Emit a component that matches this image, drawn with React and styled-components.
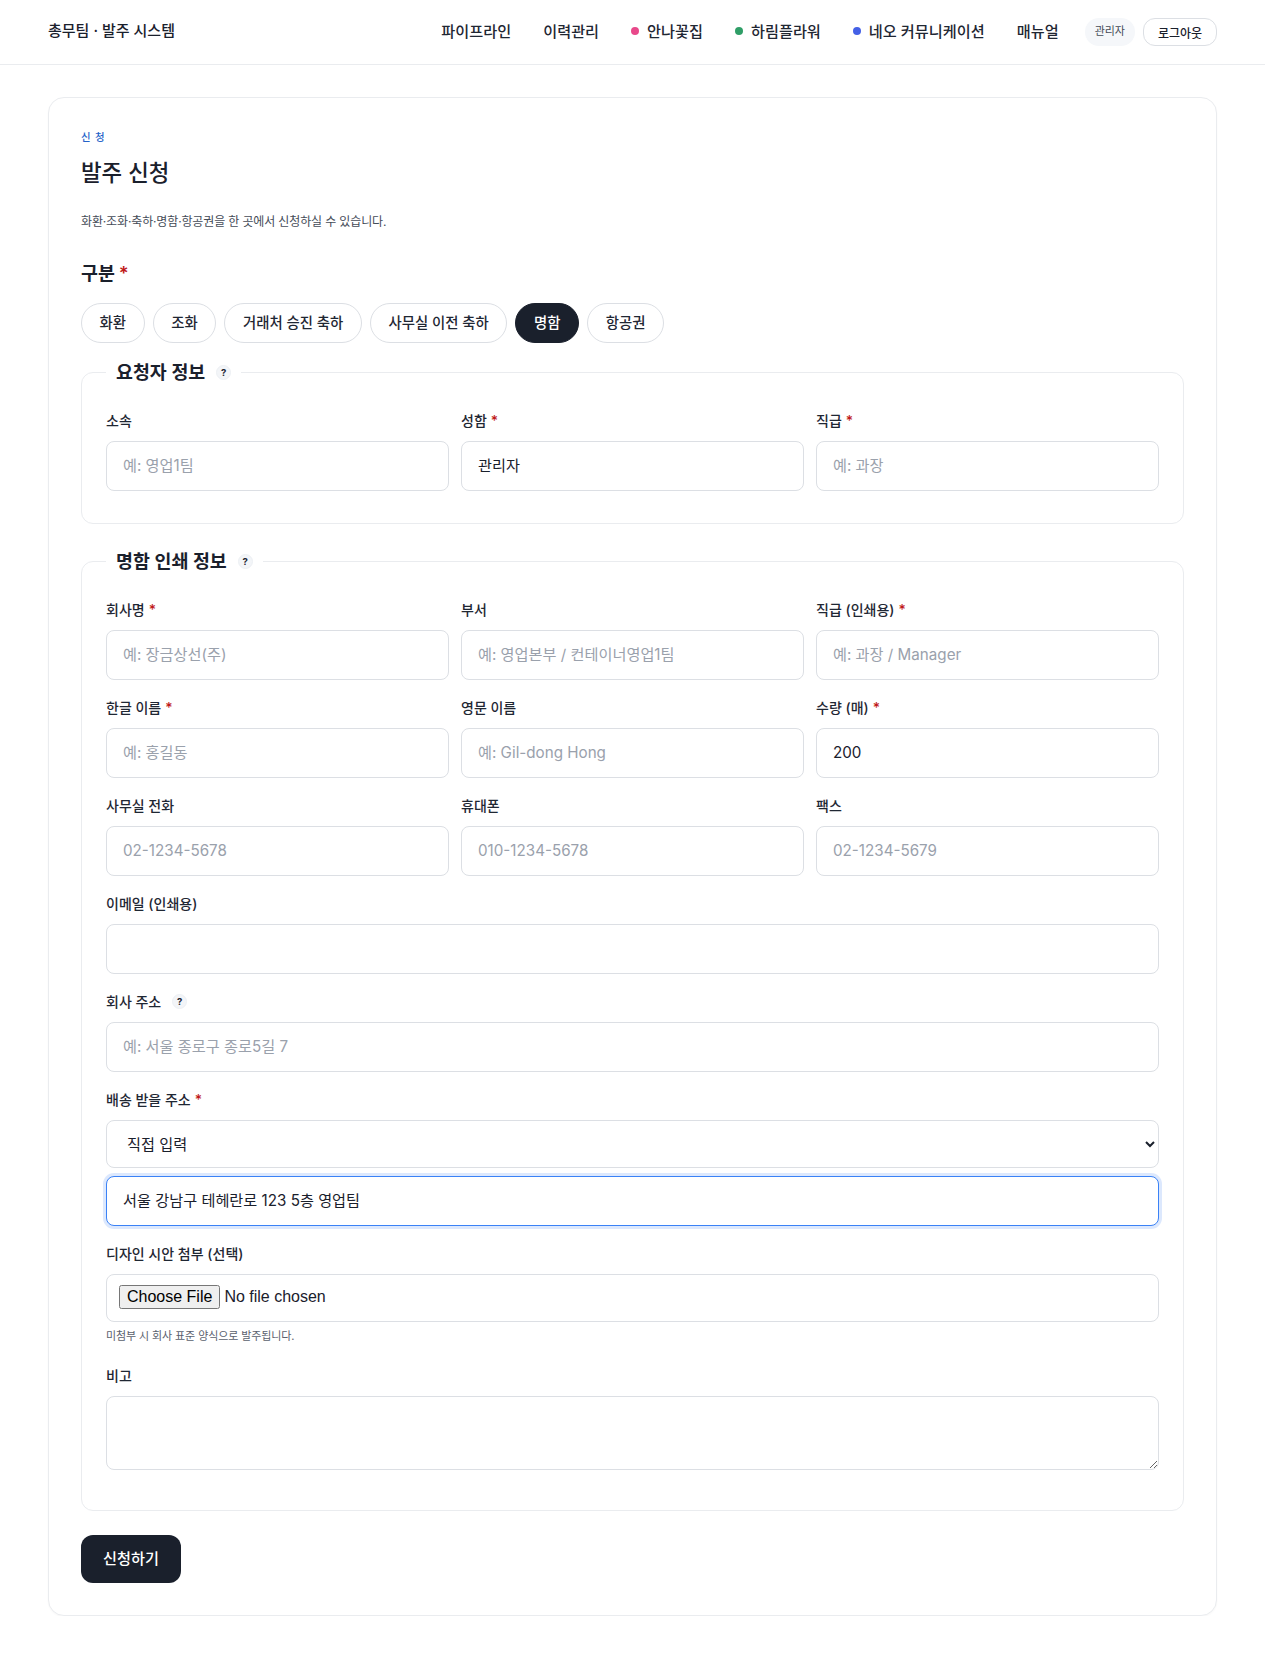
import styled, { createGlobalStyle } from 'styled-components';

const GlobalStyle = createGlobalStyle`
  * { box-sizing: border-box; }
  html, body { margin: 0; padding: 0; background: #fff; }
  body {
    font-family: Inter, "Noto Sans CJK KR", sans-serif;
    color: #1a202c;
  }
  #root { width: 1265px; }
`;

const Header = styled.header`
  height: 65px;
  padding: 0 48px;
  display: flex;
  align-items: center;
  justify-content: space-between;
  border-bottom: 1px solid #eaecef;
`;

const Brand = styled.div`
  padding-bottom: 5px;
  font-size: 15px;
  font-weight: 500;
`;

const Nav = styled.nav`
  display: flex;
  align-items: center;
`;

const NavLink = styled.a`
  display: flex;
  align-items: center;
  gap: 8px;
  margin-right: 32px;
  padding-bottom: 5px;
  font-size: 15.2px;
  font-weight: 500;
  color: #1f2733;
  &:last-of-type { margin-right: 26px; }
`;

const Dot = styled.span`
  width: 8px;
  height: 8px;
  margin-top: 3px;
  border-radius: 50%;
  background: ${(p) => p.$color};
`;

const RoleBadge = styled.span`
  height: 28px;
  padding: 0 10px 4px;
  margin-right: 8px;
  display: flex;
  align-items: center;
  border-radius: 14px;
  background: #f5f7fa;
  font-size: 11px;
  color: #444b57;
`;

const LogoutButton = styled.button`
  height: 28px;
  width: 74px;
  padding: 0;
  background: #fff;
  border: 1px solid #dcdfe4;
  border-radius: 12px;
  font: inherit;
  font-size: 12px;
  font-weight: 500;
  color: #1a202c;
`;

const Main = styled.main`
  padding: 32px 48px 0;
`;

const Card = styled.form`
  border: 1px solid #eaecef;
  border-radius: 16px;
  padding: 32px;
  background: #fff;
  box-shadow: 0 1px 2px rgba(0, 0, 0, 0.03);
`;

const Eyebrow = styled.div`
  font-size: 10.4px;
  font-weight: 500;
  line-height: 16px;
  letter-spacing: 0.8px;
  color: #2563c9;
`;

const Title = styled.h1`
  margin: 9px 0 0;
  font-size: 22.4px;
  line-height: 36px;
  font-weight: 500;
`;

const Lead = styled.p`
  margin: 21px 0 0;
  font-size: 12px;
  line-height: 20px;
  color: #444b57;
  letter-spacing: -0.14px;
`;

const GroupTitle = styled.div`
  margin-top: 28px;
  font-size: 18.4px;
  line-height: 27px;
  font-weight: 600;
`;

const Required = styled.span`
  color: #c01818;
  margin-left: 4px;
`;

const Pills = styled.div`
  display: flex;
  gap: 8px;
  margin-top: 16px;
`;

const Pill = styled.button`
  height: 40px;
  padding: 0 17.6px 3px;
  border-radius: 20px;
  border: 1px solid ${(p) => (p.$active ? '#1a202c' : '#dcdfe4')};
  background: ${(p) => (p.$active ? '#1a202c' : '#fff')};
  color: ${(p) => (p.$active ? '#fff' : '#1f2733')};
  font: inherit;
  font-size: 14.4px;
  font-weight: 500;
`;

const Section = styled.fieldset`
  margin: 16px 0 0;
  padding: 24px 24px ${(p) => p.$bottom}px;
  min-width: 0;
  border: 1px solid #eaecef;
  border-radius: 12px;
  & + & { margin-top: 24px; }
`;

const Legend = styled.legend`
  padding: 0 10px;
  display: flex;
  align-items: center;
  gap: 11px;
  font-size: 18.4px;
  line-height: 27px;
  font-weight: 600;
`;

const Help = styled.span`
  width: 15px;
  height: 15px;
  display: inline-flex;
  align-items: center;
  justify-content: center;
  border-radius: 50%;
  background: #f3f5f8;
  border: 1px solid #edf0f4;
  color: #1f2733;
  font-size: 9.6px;
  font-weight: 700;
`;

const Grid = styled.div`
  display: grid;
  grid-template-columns: repeat(3, 1fr);
  column-gap: 12px;
`;

const Field = styled.div`
  grid-column: span ${(p) => p.$span || 1};
  margin-bottom: 17px;
`;

const Label = styled.label`
  display: flex;
  align-items: center;
  margin-bottom: 10px;
  font-size: 14px;
  line-height: 21px;
  font-weight: 500;
  color: #1f2733;
  ${Help} { margin-left: 11px; }
`;

const Input = styled.input`
  display: block;
  width: 100%;
  padding: 12px 16px;
  background: #fff;
  border: 1px solid ${(p) => (p.$focused ? '#3b82f6' : '#dcdfe4')};
  border-radius: 8px;
  box-shadow: ${(p) => (p.$focused ? '0 0 0 3px rgba(59, 130, 246, 0.18)' : 'none')};
  font: inherit;
  font-size: 15.2px;
  line-height: 24px;
  color: #1a202c;
  outline: none;
  &::placeholder { color: #9aa1ac; }
`;

const Select = styled.select`
  display: block;
  width: 100%;
  height: 48px;
  margin-bottom: 8px;
  padding: 0 16px;
  background: #fff;
  border: 1px solid #dcdfe4;
  border-radius: 8px;
  font: inherit;
  font-size: 15.2px;
  color: #1a202c;
`;

const FileInput = styled.input`
  display: block;
  width: 100%;
  height: 48px;
  padding: 10px 12px;
  border: 1px solid #dcdfe4;
  border-radius: 8px;
  font-family: "Liberation Sans", sans-serif;
  font-size: 16px;
  line-height: 22px;
  color: #1a202c;
`;

const Hint = styled.div`
  margin: 4px 0 2px;
  font-size: 11px;
  line-height: 20px;
  color: #5a616d;
  letter-spacing: -0.1px;
`;

const TextArea = styled.textarea`
  display: block;
  width: 100%;
  height: 74px;
  padding: 12px 16px;
  border: 1px solid #dcdfe4;
  border-radius: 8px;
  font: inherit;
  font-size: 15.2px;
`;

const SubmitButton = styled.button`
  display: block;
  margin-top: 24px;
  width: 100px;
  height: 48px;
  padding-bottom: 5px;
  border: none;
  border-radius: 12px;
  background: #1a202c;
  color: #fff;
  font: inherit;
  font-size: 15.2px;
  font-weight: 500;
`;

const navItems = [
  { label: '파이프라인' },
  { label: '이력관리' },
  { label: '안나꽃집', color: '#e8488a' },
  { label: '하림플라워', color: '#2f9e67' },
  { label: '네오 커뮤니케이션', color: '#4460e6' },
  { label: '매뉴얼' },
];

const categories = ['화환', '조화', '거래처 승진 축하', '사무실 이전 축하', '명함', '항공권'];

const requesterFields = [
  { label: '소속', placeholder: '예: 영업1팀' },
  { label: '성함', required: true, value: '관리자' },
  { label: '직급', required: true, placeholder: '예: 과장' },
];

const cardFields = [
  { label: '회사명', required: true, placeholder: '예: 장금상선(주)' },
  { label: '부서', placeholder: '예: 영업본부 / 컨테이너영업1팀' },
  { label: '직급 (인쇄용)', required: true, placeholder: '예: 과장 / Manager' },
  { label: '한글 이름', required: true, placeholder: '예: 홍길동' },
  { label: '영문 이름', placeholder: '예: Gil-dong Hong' },
  { label: '수량 (매)', required: true, value: '200' },
  { label: '사무실 전화', placeholder: '02-1234-5678' },
  { label: '휴대폰', placeholder: '010-1234-5678' },
  { label: '팩스', placeholder: '02-1234-5679' },
  { label: '이메일 (인쇄용)', span: 3 },
  { label: '회사 주소', help: true, span: 3, placeholder: '예: 서울 종로구 종로5길 7' },
];

const TextField = ({ label, required, help, span, value, placeholder }) => (
  <Field $span={span}>
    <Label>
      {label}
      {required && <Required>*</Required>}
      {help && <Help>?</Help>}
    </Label>
    <Input defaultValue={value} placeholder={placeholder} />
  </Field>
);

const App = () => (
  <>
    <GlobalStyle />
    <Header>
      <Brand>총무팀 · 발주 시스템</Brand>
      <Nav>
        {navItems.map((item) => (
          <NavLink key={item.label}>
            {item.color && <Dot $color={item.color} />}
            {item.label}
          </NavLink>
        ))}
        <RoleBadge>관리자</RoleBadge>
        <LogoutButton type="button">로그아웃</LogoutButton>
      </Nav>
    </Header>
    <Main>
      <Card>
        <Eyebrow>신 청</Eyebrow>
        <Title>발주 신청</Title>
        <Lead>화환·조화·축하·명함·항공권을 한 곳에서 신청하실 수 있습니다.</Lead>
        <GroupTitle>
          구분<Required>*</Required>
        </GroupTitle>
        <Pills>
          {categories.map((c) => (
            <Pill key={c} type="button" $active={c === '명함'}>
              {c}
            </Pill>
          ))}
        </Pills>
        <Section $bottom={15}>
          <Legend>
            요청자 정보 <Help>?</Help>
          </Legend>
          <Grid>
            {requesterFields.map((f) => (
              <TextField key={f.label} {...f} />
            ))}
          </Grid>
        </Section>
        <Section $bottom={23}>
          <Legend>
            명함 인쇄 정보 <Help>?</Help>
          </Legend>
          <Grid>
            {cardFields.map((f) => (
              <TextField key={f.label} {...f} />
            ))}
            <Field $span={3}>
              <Label>
                배송 받을 주소<Required>*</Required>
              </Label>
              <Select defaultValue="direct">
                <option value="direct">직접 입력</option>
              </Select>
              <Input $focused defaultValue="서울 강남구 테헤란로 123 5층 영업팀" />
            </Field>
            <Field $span={3}>
              <Label>디자인 시안 첨부 (선택)</Label>
              <FileInput type="file" />
              <Hint>미첨부 시 회사 표준 양식으로 발주됩니다.</Hint>
            </Field>
            <Field $span={3}>
              <Label>비고</Label>
              <TextArea />
            </Field>
          </Grid>
        </Section>
        <SubmitButton type="button">신청하기</SubmitButton>
      </Card>
    </Main>
  </>
);

export default App;
